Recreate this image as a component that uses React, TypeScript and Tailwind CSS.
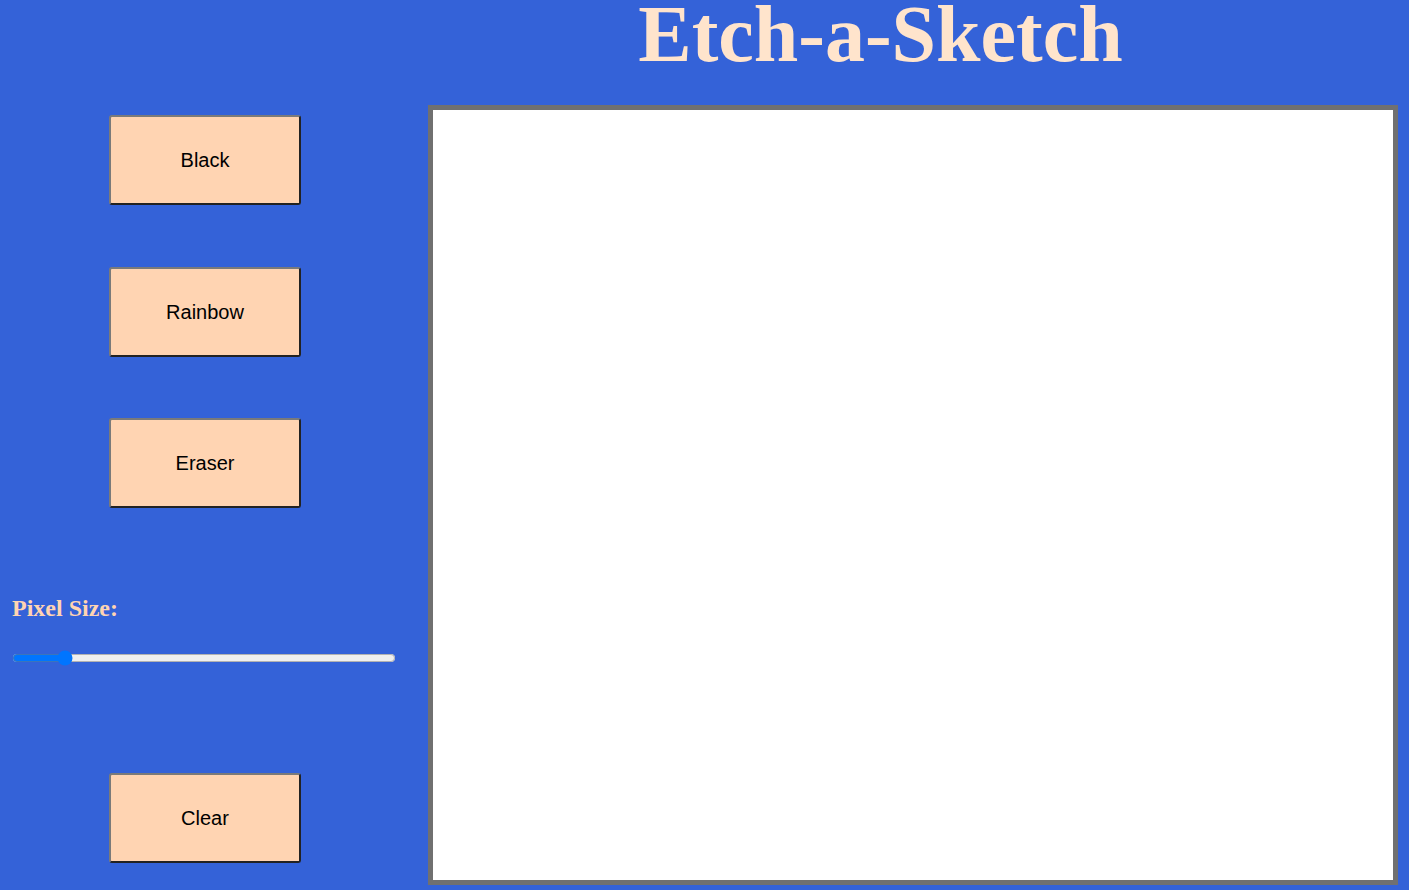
import { useState } from 'react';

const btnClass =
  "w-[192px] h-[90px] bg-[#ffd4b2] rounded-[3px] border-2 border-t-[#7a7a7a] border-l-[#7a7a7a] border-b-[#222] border-r-[#222] text-[20px] text-black font-['Liberation_Sans',Arial,sans-serif]";

export default function App() {
  const [size, setSize] = useState(13);

  return (
    <div className="w-full h-[890px] overflow-hidden bg-[#3462d8]">
      <header className="h-[105px] flex justify-center pl-[352px]">
        <h1 className="text-[80px] leading-[68px] font-bold text-[#ffe4cc] font-['Liberation_Serif','Times_New_Roman',serif]">
          Etch-a-Sketch
        </h1>
      </header>

      <div className="flex">
        <aside className="w-[410px] flex flex-col items-center">
          <button className={`mt-[10px] ${btnClass}`}>Black</button>
          <button className={`mt-[62px] ${btnClass}`}>Rainbow</button>
          <button className={`mt-[61px] ${btnClass}`}>Eraser</button>

          <div className="self-stretch px-3 mt-[82px]">
            <label className="block text-[24px] font-bold text-[#ffd4b2] font-['Liberation_Serif','Times_New_Roman',serif]">
              Pixel Size:
            </label>
            <input
              type="range"
              min={1}
              max={100}
              value={size}
              onChange={(e) => setSize(Number(e.target.value))}
              className="block mt-[24px] w-[384px] h-4 m-0"
            />
          </div>

          <button className={`mt-[107px] ${btnClass}`}>Clear</button>
        </aside>

        <div className="ml-[18px] w-[970px] h-[780px] border-[5px] border-[#707070] bg-white" />
      </div>
    </div>
  );
}
